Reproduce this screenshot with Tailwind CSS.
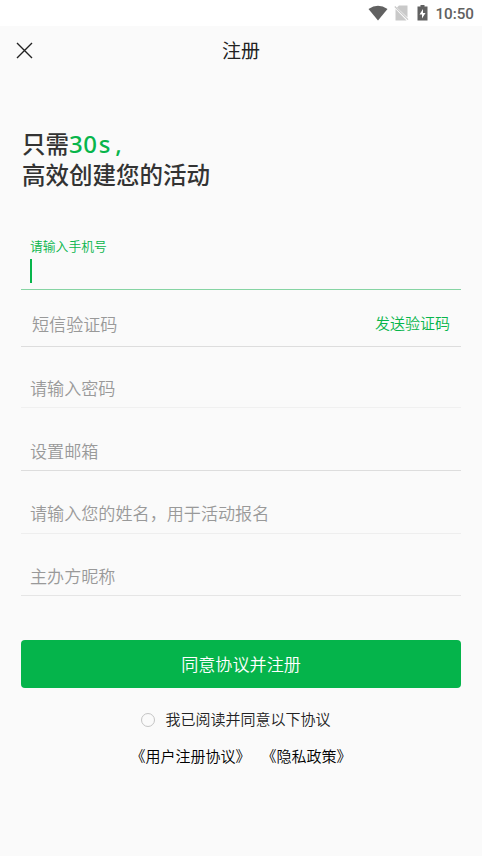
<!DOCTYPE html>
<html lang="zh-CN"><head><meta charset="utf-8"><title>注册</title>
<script src="https://cdn.jsdelivr.net/npm/@tailwindcss/browser@4"></script></head>
<body class="bg-[#fafafa] font-['Noto_Sans_CJK_SC',sans-serif] font-[350]">
<div class="w-[482px] h-[856px] overflow-hidden flex flex-col">
<div class="h-[26px] bg-white flex items-center justify-end pr-[8px] shrink-0">
<svg class="w-[20px] h-[16px] mr-[6px]" viewBox="0 0 20 16"><path d="M.5 4Q10-2.500 19.500 4L10 15.500Z" fill="#616161"/></svg>
<svg class="w-[15px] h-[16px] mr-[8px]" viewBox="0 0 15 16"><path d="M5 .5H13.500V12.500L3 2.500Z M1.500 4L12.500 15.500H1.500Z" fill="#c9c9c9"/><path d="M.8 1.500L14 14.700" stroke="#c9c9c9" stroke-width="1.200"/></svg>
<svg class="w-[11px] h-[16px] mr-[7px]" viewBox="0 0 11 16"><path fill-rule="evenodd" d="M3.500 0H7.500V1.500H10.500V15.500H.5V1.500H3.500ZM6 4L2.500 9.500H5V13.500L8.500 8H6Z" fill="#616161"/></svg>
<span class="font-[Roboto] font-medium text-[15.200px] leading-[26px] pt-[2px] text-[#616161]">10:50</span>
</div>
<header class="h-[48px] flex items-center shrink-0 pl-4">
<svg class="w-[17px] h-[17px]" viewBox="0 0 17 17"><path d="M1 1L16 16M16 1L1 16" stroke="#222" stroke-width="1.400"/></svg>
<h1 class="flex-1 text-center pr-[33px] text-[19px] text-[#222] font-normal">注册</h1>
</header>
<main class="px-[21px] pt-[54px]">
<h2 class="h-[62px] text-[23.500px] leading-[31px] font-medium text-[#333] pl-px">只需<span class="text-[#07b54b] font-['Noto_Sans'] font-medium inline-flex leading-[31px] text-[24px]"><span class="tracking-[0.600px]">30</span><span class="tracking-[5px] pl-[1px]">s</span>,</span><br>高效创建您的活动</h2>
<div class="h-[100px] border-b border-[#86d4a3] pt-[46px] pl-[9px] text-[12.800px] leading-[20px] text-[#07b54b]">请输入手机号<div class="w-[2px] h-[24px] bg-[#07b54b] mt-[3px]"></div></div>
<div class="h-[57px] border-b border-[#ddd] pl-[11px] pr-[11px] flex items-center justify-between text-[17.100px] text-[#999]"><span class="pt-3">短信验证码</span><span class="pt-[10px] text-[15px] text-[#07b54b]">发送验证码</span></div>
<div class="h-[61px] border-b border-[#f0f0f0] pl-[9px] pt-[28px] text-[17.100px] leading-[26px] text-[#999]">请输入密码</div>
<div class="h-[63px] border-b border-[#ddd] pl-[9px] pt-[30px] text-[17.100px] leading-[26px] text-[#999]">设置邮箱</div>
<div class="h-[63px] border-b border-[#eee] pl-[9px] pt-[29px] text-[17.100px] leading-[26px] text-[#999]">请输入您的姓名，用于活动报名</div>
<div class="h-[62px] border-b border-[#e5e5e5] pl-[9px] pt-[29px] text-[17.100px] leading-[26px] text-[#999]">主办方昵称</div>
<button class="mt-[44px] w-full h-[48px] rounded-[4px] bg-[#05b44b] text-white text-[17.100px] block">同意协议并注册</button>
<div class="mt-[19px] flex items-center justify-center gap-[10px] text-[15px] leading-6 text-[#222] pr-[10px]"><span class="w-[14px] h-[14px] mt-[2px] rounded-full border border-[#c4c4c4]"></span>我已阅读并同意以下协议</div>
<div class="mt-[13px] flex justify-center gap-[11px] text-[15px] leading-6 text-black"><span>《用户注册协议》</span><span>《隐私政策》</span></div>
</main></div></body></html>
